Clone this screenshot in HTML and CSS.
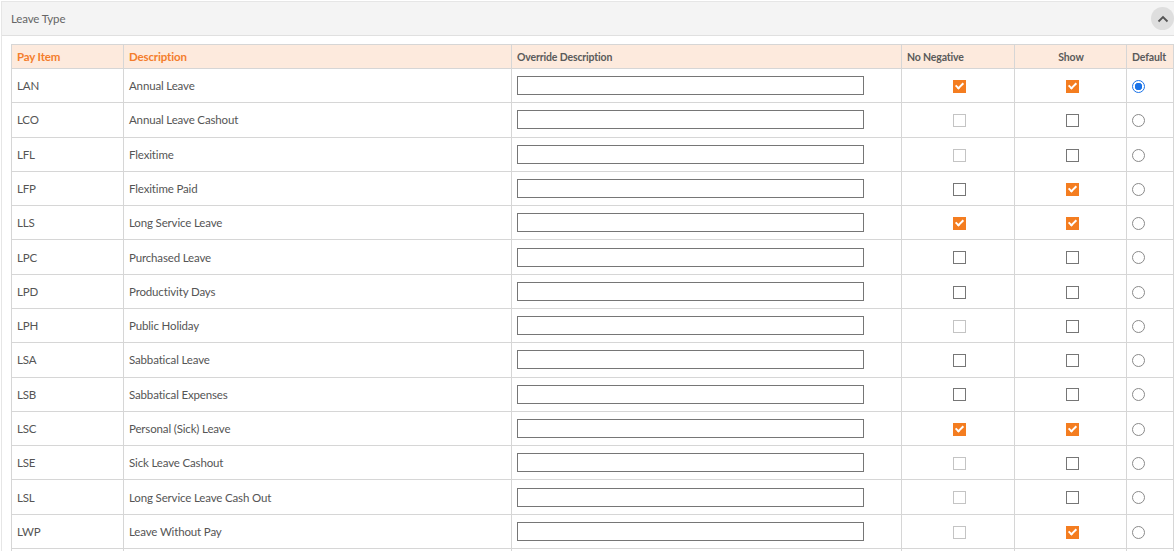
FILE: index.html
```html
<!DOCTYPE html>
<html>
<head>
<meta charset="utf-8">
<link rel="stylesheet" href="styles.css">
</head>
<body>
<div class="panel">
  <div class="panel-head">
    <span class="panel-title">Leave Type</span>
    <span class="collapse-btn"><svg width="12" height="8" viewBox="0 0 12 8"><path d="M1.5 6.5 L6 2 L10.5 6.5" fill="none" stroke="#555" stroke-width="1.8"/></svg></span>
  </div>
  <div class="panel-body">
    <table class="grid">
      <colgroup>
        <col class="c-pay"><col class="c-desc"><col class="c-over"><col class="c-nn"><col class="c-show"><col class="c-def">
      </colgroup>
      <thead>
        <tr>
          <th class="orange">Pay Item</th>
          <th class="orange">Description</th>
          <th class="small">Override Description</th>
          <th class="small">No Negative</th>
          <th class="small center">Show</th>
          <th class="small">Default</th>
        </tr>
      </thead>
      <tbody>
        <tr><td>LAN</td><td>Annual Leave</td><td><span class="inp"></span></td><td class="center"><span class="cb on"></span></td><td class="center"><span class="cb on"></span></td><td><span class="rd on"></span></td></tr>
        <tr><td>LCO</td><td>Annual Leave Cashout</td><td><span class="inp"></span></td><td class="center"><span class="cb dis"></span></td><td class="center"><span class="cb"></span></td><td><span class="rd"></span></td></tr>
        <tr><td>LFL</td><td>Flexitime</td><td><span class="inp"></span></td><td class="center"><span class="cb dis"></span></td><td class="center"><span class="cb"></span></td><td><span class="rd"></span></td></tr>
        <tr><td>LFP</td><td>Flexitime Paid</td><td><span class="inp"></span></td><td class="center"><span class="cb"></span></td><td class="center"><span class="cb on"></span></td><td><span class="rd"></span></td></tr>
        <tr><td>LLS</td><td>Long Service Leave</td><td><span class="inp"></span></td><td class="center"><span class="cb on"></span></td><td class="center"><span class="cb on"></span></td><td><span class="rd"></span></td></tr>
        <tr><td>LPC</td><td>Purchased Leave</td><td><span class="inp"></span></td><td class="center"><span class="cb"></span></td><td class="center"><span class="cb"></span></td><td><span class="rd"></span></td></tr>
        <tr><td>LPD</td><td>Productivity Days</td><td><span class="inp"></span></td><td class="center"><span class="cb"></span></td><td class="center"><span class="cb"></span></td><td><span class="rd"></span></td></tr>
        <tr><td>LPH</td><td>Public Holiday</td><td><span class="inp"></span></td><td class="center"><span class="cb dis"></span></td><td class="center"><span class="cb"></span></td><td><span class="rd"></span></td></tr>
        <tr><td>LSA</td><td>Sabbatical Leave</td><td><span class="inp"></span></td><td class="center"><span class="cb"></span></td><td class="center"><span class="cb"></span></td><td><span class="rd"></span></td></tr>
        <tr><td>LSB</td><td>Sabbatical Expenses</td><td><span class="inp"></span></td><td class="center"><span class="cb"></span></td><td class="center"><span class="cb"></span></td><td><span class="rd"></span></td></tr>
        <tr><td>LSC</td><td>Personal (Sick) Leave</td><td><span class="inp"></span></td><td class="center"><span class="cb on"></span></td><td class="center"><span class="cb on"></span></td><td><span class="rd"></span></td></tr>
        <tr><td>LSE</td><td>Sick Leave Cashout</td><td><span class="inp"></span></td><td class="center"><span class="cb dis"></span></td><td class="center"><span class="cb"></span></td><td><span class="rd"></span></td></tr>
        <tr><td>LSL</td><td>Long Service Leave Cash Out</td><td><span class="inp"></span></td><td class="center"><span class="cb dis"></span></td><td class="center"><span class="cb"></span></td><td><span class="rd"></span></td></tr>
        <tr><td>LWP</td><td>Leave Without Pay</td><td><span class="inp"></span></td><td class="center"><span class="cb dis"></span></td><td class="center"><span class="cb on"></span></td><td><span class="rd"></span></td></tr>
        <tr><td></td><td></td><td></td><td></td><td></td><td></td></tr>
      </tbody>
    </table>
  </div>
</div>
</body>
</html>
```

FILE: styles.css
```css
html, body {
  margin: 0;
  padding: 0;
  background: #ffffff;
  overflow: hidden;
}
body {
  font-family: "Lato", "Open Sans", sans-serif;
  font-size: 11.5px;
  letter-spacing: -0.15px;
  color: #555555;
}
.panel {
  margin: 1px 0 0 1px;
  border-left: 1px solid #e6e6e6;
  border-top: 1px solid #e6e6e6;
}
.panel-head {
  height: 33px;
  background: #f4f4f4;
  border-bottom: 1px solid #e0e0e0;
  display: flex;
  align-items: center;
  justify-content: space-between;
  padding-left: 9px;
}
.panel-title {
  font-size: 11.5px;
  color: #666666;
}
.collapse-btn {
  width: 23px;
  height: 23px;
  border-radius: 50%;
  background: #dedede;
  display: flex;
  align-items: center;
  justify-content: center;
}
.panel-body {
  padding: 8px 0 0 9px;
}
.grid {
  border-collapse: collapse;
  table-layout: fixed;
  width: 1162px;
}
.c-pay { width: 112px; }
.c-desc { width: 388px; }
.c-over { width: 390px; }
.c-nn { width: 113px; }
.c-show { width: 112px; }
.c-def { width: 47px; }
.grid th, .grid td {
  border: 1px solid #d6d6d6;
  padding: 0 4px 0 5px;
  text-align: left;
  vertical-align: middle;
  white-space: nowrap;
  overflow: hidden;
}
.grid thead tr {
  height: 24px;
  background: #fdeadd;
}
.grid th {
  font-weight: 700;
}
.grid th.orange {
  color: #f47d2c;
  font-size: 11.5px;
}
.grid th.small {
  color: #5a5a5a;
  font-size: 10.5px;
}
.grid th.center, .grid td.center {
  text-align: center;
}
.grid tbody tr {
  height: 34.2857px;
}
.inp {
  display: block;
  width: 345px;
  height: 17px;
  border: 1px solid #767676;
  background: #fff;
}
.cb {
  display: inline-block;
  width: 11px;
  height: 11px;
  border: 1px solid #767676;
  background: #fff;
  vertical-align: middle;
  position: relative;
  left: 1px;
}
.cb.dis {
  border-color: #c4c4c4;
}
.cb.on {
  background: #f47d20;
  border-color: #f47d20;
}
.cb.on::after {
  content: "";
  position: absolute;
  left: 3px;
  top: 0px;
  width: 3px;
  height: 6px;
  border-right: 2px solid #fff;
  border-bottom: 2px solid #fff;
  transform: rotate(45deg);
}
.rd {
  display: inline-block;
  width: 11px;
  height: 11px;
  border: 1px solid #8a8a8a;
  border-radius: 50%;
  background: #fff;
  vertical-align: middle;
  box-sizing: content-box;
}
.rd.on {
  border-color: #1a73e8;
  background: radial-gradient(circle, #1a73e8 0 3.5px, #fff 4px);
}
```
